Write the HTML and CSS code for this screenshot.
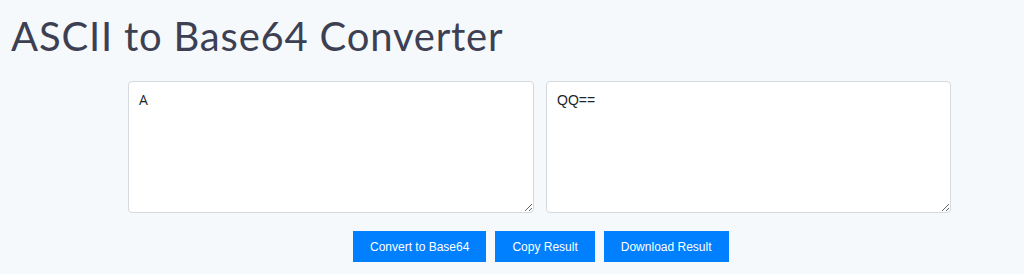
FILE: index.html
```html
<!DOCTYPE html>
<html>
<head>
<meta charset="utf-8">
<link rel="stylesheet" href="styles.css">
</head>
<body>
<h1 class="title">ASCII to Base64 Converter</h1>
<div class="panes">
  <textarea class="box box-in">A</textarea>
  <textarea class="box box-out" readonly>QQ==</textarea>
</div>
<div class="actions">
  <button class="btn">Convert to Base64</button>
  <button class="btn">Copy Result</button>
  <button class="btn">Download Result</button>
</div>
</body>
</html>
```
FILE: styles.css
```css
html, body {
  margin: 0;
  padding: 0;
  background: #f5f9fc;
}
body {
  width: 1024px;
  height: 274px;
  overflow: hidden;
}
.title {
  margin: 0;
  padding: 12px 0 0 11px;
  font-family: "Lato", "Noto Sans", sans-serif;
  font-weight: 400;
  font-size: 40px;
  line-height: 48px;
  letter-spacing: 0.8px;
  color: #3d4052;
}
.panes {
  display: flex;
  gap: 12px;
  margin: 21px 0 0 128px;
}
.box {
  box-sizing: border-box;
  width: 406px;
  height: 132px;
  margin: 0;
  padding: 9px 10px;
  border: 1px solid #d5dade;
  border-radius: 4px;
  background: #fff;
  color: #212529;
  font-size: 14px;
  line-height: 18px;
  resize: vertical;
}
.box-in {
  font-family: "Open Sans", sans-serif;
}
.box-out {
  width: 405px;
  font-family: "Liberation Sans", Arial, sans-serif;
}
.actions {
  display: flex;
  gap: 9px;
  margin: 18px 0 0 353px;
}
.btn {
  height: 31px;
  padding: 0 17px;
  border: 0;
  border-radius: 0;
  background: #0080ff;
  color: #fff;
  font-family: "Liberation Sans", Arial, sans-serif;
  font-size: 12px;
}
```
